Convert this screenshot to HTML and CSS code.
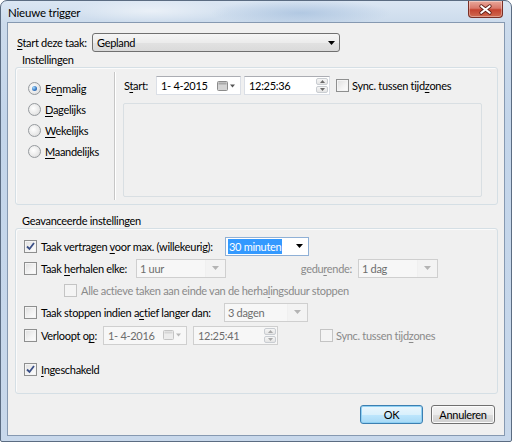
FILE: index.html
```html
<!DOCTYPE html>
<html lang="nl">
<head>
<meta charset="utf-8">
<title>Nieuwe trigger</title>
<link rel="stylesheet" href="styles.css">
</head>
<body>
<div class="window">
  <div class="titlebar">
    <span class="title">Nieuwe trigger</span>
    <div class="close-btn">
      <svg width="35" height="17" viewBox="0 0 35 17"><path d="M13 5 L22 12 M22 5 L13 12" stroke="#5e1d15" stroke-width="4" stroke-linecap="round"/><path d="M13 5 L22 12 M22 5 L13 12" stroke="#ffffff" stroke-width="2.2" stroke-linecap="round"/></svg>
    </div>
  </div>
  <div class="client">
    <div class="start-row">
      <span class="start-label"><u>S</u>tart deze taak:</span>
      <div class="combo combo-main"><span class="combo-text">Gepland</span><svg class="tri" width="7" height="4" viewBox="0 0 7 4"><path d="M0 0H7L3.5 4Z" fill="#000"/></svg></div>
    </div>
    <div class="group-title">Instellingen</div>
    <div class="group settings">
      <div class="radios">
        <div class="radio-row"><span class="radio on"></span><span>Ee<u>n</u>malig</span></div>
        <div class="radio-row"><span class="radio"></span><span><u>D</u>agelijks</span></div>
        <div class="radio-row"><span class="radio"></span><span><u>W</u>ekelijks</span></div>
        <div class="radio-row"><span class="radio"></span><span><u>M</u>aandelijks</span></div>
      </div>
      <div class="vsep"></div>
      <div class="settings-right">
        <div class="start-line">
          <span class="lbl-start">S<u>t</u>art:</span>
          <div class="field date"><span class="ftext">1- 4-2015</span><svg class="cal" width="18" height="10" viewBox="0 0 18 10"><rect x="0.5" y="0.5" width="10" height="9" rx="1" fill="#d4d4d4" stroke="#8c8c8c"/><rect x="1.5" y="1.5" width="8" height="2" fill="#a8a8a8"/><path d="M13 3.5H18L15.5 6.5Z" fill="#555"/></svg></div>
          <div class="field time"><span class="ftext">12:25:36</span>
            <div class="spin"><span class="spin-btn"><svg width="5" height="3" viewBox="0 0 5 3"><path d="M0 3H5L2.5 0Z" fill="#6b6b6b"/></svg></span><span class="spin-btn"><svg width="5" height="3" viewBox="0 0 5 3"><path d="M0 0H5L2.5 3Z" fill="#6b6b6b"/></svg></span></div>
          </div>
          <span class="check"></span><span class="check-label">Sync. tussen tijd<u>z</u>ones</span>
        </div>
        <div class="panel"></div>
      </div>
    </div>
    <div class="group-title adv-title">Geavanceerde instellingen</div>
    <div class="group advanced">
      <div class="row r1">
        <span class="check on"><svg width="11" height="11" viewBox="0 0 11 11"><path d="M2 5.5 L4.5 8 L9 2" fill="none" stroke="#3a4f86" stroke-width="1.8"/></svg></span>
        <span class="row-label w184">Taak vertragen <u>v</u>oor max. (willekeurig):</span>
        <div class="combo edit w84"><span class="sel">30 minuten</span><svg class="tri" width="7" height="4" viewBox="0 0 7 4"><path d="M0 0H7L3.5 4Z" fill="#000"/></svg></div>
      </div>
      <div class="row r2">
        <span class="check"></span>
        <span class="row-label w95">Taak <u>h</u>erhalen elke:</span>
        <div class="combo dis w90"><span class="combo-text">1 uur</span><span class="dis-arrow"><svg width="7" height="4" viewBox="0 0 7 4"><path d="M0 0H7L3.5 4Z" fill="#b4b4b4"/></svg></span></div>
        <span class="right-label gray">gedu<u>r</u>ende:</span>
        <div class="combo dis w80"><span class="combo-text">1 dag</span><span class="dis-arrow"><svg width="7" height="4" viewBox="0 0 7 4"><path d="M0 0H7L3.5 4Z" fill="#b4b4b4"/></svg></span></div>
      </div>
      <div class="row r3">
        <span class="check disabled"></span>
        <span class="row-label gray">Alle actieve taken aan einde van de herha<u>l</u>ingsduur stoppen</span>
      </div>
      <div class="row r4">
        <span class="check"></span>
        <span class="row-label w183">Taak stoppen indien a<u>c</u>tief langer dan:</span>
        <div class="combo dis w84"><span class="combo-text">3 dagen</span><span class="dis-arrow"><svg width="7" height="4" viewBox="0 0 7 4"><path d="M0 0H7L3.5 4Z" fill="#b4b4b4"/></svg></span></div>
      </div>
      <div class="row r5">
        <span class="check"></span>
        <span class="row-label w62">Verloopt o<u>p</u>:</span>
        <div class="field date dis-field w84"><span class="ftext">1- 4-2016</span><svg class="cal" width="18" height="10" viewBox="0 0 18 10"><rect x="0.5" y="0.5" width="10" height="9" rx="1" fill="#ececec" stroke="#c4c4c4"/><rect x="1.5" y="1.5" width="8" height="2" fill="#d6d6d6"/><path d="M13 3.5H18L15.5 6.5Z" fill="#b8b8b8"/></svg></div>
        <div class="field time dis-field w85"><span class="ftext">12:25:41</span>
          <div class="spin"><span class="spin-btn"><svg width="5" height="3" viewBox="0 0 5 3"><path d="M0 3H5L2.5 0Z" fill="#a8a8a8"/></svg></span><span class="spin-btn"><svg width="5" height="3" viewBox="0 0 5 3"><path d="M0 0H5L2.5 3Z" fill="#a8a8a8"/></svg></span></div>
        </div>
        <span class="check disabled sync2"></span><span class="check-label gray">Sync. tussen tijd<u>z</u>ones</span>
      </div>
      <div class="row r6">
        <span class="check on"><svg width="11" height="11" viewBox="0 0 11 11"><path d="M2 5.5 L4.5 8 L9 2" fill="none" stroke="#3a4f86" stroke-width="1.8"/></svg></span>
        <span class="row-label"><u>I</u>ngeschakeld</span>
      </div>
    </div>
    <div class="buttons">
      <div class="btn default">OK</div>
      <div class="btn">Annuleren</div>
    </div>
  </div>
</div>
</body>
</html>
```

FILE: styles.css
```css
* { box-sizing: border-box; }
html, body { margin: 0; padding: 0; }
body {
  width: 512px;
  height: 442px;
  overflow: hidden;
  background: #ffffff;
  font-family: Lato, "Noto Sans", sans-serif;
  font-size: 11px;
  letter-spacing: -0.3px;
  color: #000;
  white-space: nowrap;
}
u { text-decoration-thickness: 1px; text-underline-offset: 2px; }

.window {
  width: 512px;
  height: 442px;
  border: 1px solid #5b6c82;
  border-radius: 7px 7px 2px 2px;
  background:
    radial-gradient(ellipse 90px 14px at 300px 12px, rgba(150,180,215,0.55), rgba(150,180,215,0) 100%),
    radial-gradient(ellipse 80px 12px at 150px 10px, rgba(255,255,255,0.5), rgba(255,255,255,0) 100%),
    linear-gradient(180deg, #dbe6f3 0px, #ccdbec 22px, #c3d5ea 120px, #c8d8eb 100%);
  display: flex;
  flex-direction: column;
}

.titlebar {
  height: 21px;
  display: flex;
  align-items: flex-start;
  flex: none;
}
.title {
  padding: 4px 0 0 7px;
  font-size: 11.5px;
  line-height: 15px;
  letter-spacing: -0.2px;
  color: #000;
}
.close-btn {
  margin-left: auto;
  margin-right: 8px;
  width: 35px;
  height: 17px;
  border: 1px solid #7a2f25;
  border-top: none;
  border-radius: 0 0 4px 4px;
  background: linear-gradient(180deg, #e9a99b 0%, #d9786a 45%, #c4432f 55%, #cf6a50 100%);
  box-shadow: inset 0 0 0 1px rgba(255,255,255,0.35);
  display: flex;
}
.close-btn svg { display: block; }

.client {
  flex: 1;
  margin: 0 6px 5px 6px;
  border: 1px solid #8699b1;
  background: #f0f0f0;
  display: flex;
  flex-direction: column;
}

.start-row {
  display: flex;
  align-items: center;
  padding: 10px 0 0 9px;
  height: 29px;
}
.start-label { width: 75px; flex: none; }

.combo {
  height: 19px;
  display: flex;
  align-items: center;
  position: relative;
}
.combo-main {
  width: 248px;
  border: 1px solid #707070;
  border-radius: 3px;
  background: linear-gradient(180deg, #f5f5f5 0%, #ececec 50%, #e2e2e2 51%, #dadada 100%);
  padding-left: 4px;
}
.combo-main .tri { margin-left: auto; margin-right: 4px; }

.group-title {
  margin-left: 14px;
  height: 15px;
  line-height: 15px;
}
.group {
  margin: 0 6px 0 7px;
  border: 1px solid #d5dfe5;
  border-radius: 3px;
  box-shadow: inset 1px 1px 0 #fbfbfb;
}

.settings {
  height: 138px;
  display: flex;
}
.radios {
  width: 98px;
  padding: 10px 0 0 12px;
}
.radio-row {
  height: 21px;
  display: flex;
  align-items: center;
  gap: 4px;
}
.radio {
  width: 13px;
  height: 13px;
  border-radius: 50%;
  border: 1px solid #969a9e;
  background: radial-gradient(circle at 40% 40%, #ffffff 0%, #e8e8e8 60%, #d2d2d2 100%);
  flex: none;
  position: relative;
}
.radio.on::after {
  content: "";
  position: absolute;
  left: 3px;
  top: 3px;
  width: 5px;
  height: 5px;
  border-radius: 50%;
  background: radial-gradient(circle at 35% 35%, #a9dcfb 0%, #3a7bc7 55%, #1b4a86 100%);
}
.vsep {
  width: 2px;
  margin: 4px 0;
  border-left: 1px solid #c6c6c6;
  border-right: 1px solid #ffffff;
}
.settings-right {
  flex: 1;
  padding: 8px 15px 7px 7px;
  display: flex;
  flex-direction: column;
}
.start-line {
  height: 19px;
  display: flex;
  align-items: center;
}
.lbl-start { width: 33px; padding-left: 1px; flex: none; }

.field {
  height: 19px;
  background: #ffffff;
  border: 1px solid #dbdfe6;
  border-top-color: #abadb3;
  display: flex;
  align-items: center;
  padding-left: 4px;
  flex: none;
}
.ftext { white-space: pre; }
.date { width: 85px; }
.date .cal { margin-left: auto; margin-right: 5px; }
.time { width: 86px; margin-left: 3px; }
.spin {
  margin-left: auto;
  margin-right: 1px;
  display: flex;
  flex-direction: column;
  gap: 1px;
}
.spin-btn {
  width: 12px;
  height: 7px;
  border: 1px solid #c9cdd2;
  border-radius: 2px;
  background: linear-gradient(180deg, #f6f6f6, #e4e4e4);
  display: flex;
  align-items: center;
  justify-content: center;
}
.spin-btn svg { display: block; }

.check {
  width: 13px;
  height: 13px;
  border: 1px solid #8e8f8f;
  background: linear-gradient(135deg, #dedede 0%, #f4f4f4 60%, #fdfdfd 100%);
  box-shadow: inset 0 0 0 1px #f4f4f4;
  flex: none;
  display: flex;
  align-items: center;
  justify-content: center;
}
.check svg { display: block; }
.check.disabled {
  border-color: #c4c4c4;
  background: #f4f4f4;
  box-shadow: none;
}
.start-line .check { margin-left: 6px; }
.check-label { margin-left: 3px; }

.panel {
  flex: 1;
  margin-top: 8px;
  border: 1px solid #d9dfe3;
  border-radius: 2px;
}

.adv-title { margin-top: 8px; }
.advanced {
  height: 166px;
  padding: 7px 0 0 8px;
}
.row {
  height: 20px;
  display: flex;
  align-items: center;
}
.r2, .r3, .r4 { margin-top: 2px; }
.r5 { margin-top: 3px; }
.r6 { margin-top: 14px; }
.r3 { padding-left: 40px; }
.row-label { margin-left: 4px; white-space: nowrap; }
.w184 { width: 184px; flex: none; }
.w183 { width: 183px; flex: none; }
.w95 { width: 95px; flex: none; }
.w62 { width: 62px; flex: none; }
.w84 { width: 84px; flex: none; }
.w85 { width: 85px; flex: none; }
.w90 { width: 90px; flex: none; }
.w80 { width: 80px; flex: none; }
.gray { color: #8a8a8a; }

.combo.edit {
  background: #ffffff;
  border: 1px solid #8fb0d6;
  padding-left: 2px;
}
.sel {
  background: #3399ff;
  color: #ffffff;
  padding: 0 1px;
  line-height: 15px;
}
.combo.edit .tri { margin-left: auto; margin-right: 5px; }

.combo.dis {
  background: #f7f7f7;
  border: 1px solid #cfcfcf;
  padding-left: 3px;
  color: #6d6d6d;
}
.dis-arrow {
  margin-left: auto;
  width: 20px;
  height: 100%;
  display: flex;
  align-items: center;
  justify-content: center;
  border-left: 1px solid #f0f0f0;
  background: #f3f3f3;
}
.right-label {
  width: 126px;
  text-align: right;
  margin-right: 6px;
  flex: none;
}
.dis-field {
  background: #f7f7f7;
  border-color: #cfcfcf;
  color: #6d6d6d;
}
.r5 .time { margin-left: 6px; }
.sync2 { margin-left: 42px; }

.buttons {
  display: flex;
  justify-content: flex-end;
  gap: 8px;
  margin-top: 11px;
  padding-right: 9px;
}
.btn {
  height: 19px;
  width: 64px;
  border: 1px solid #707070;
  border-radius: 3px;
  background: linear-gradient(180deg, #f3f3f3 0%, #ebebeb 50%, #dddddd 51%, #d0d0d0 100%);
  box-shadow: inset 0 0 0 1px #fcfcfc;
  display: flex;
  align-items: center;
  justify-content: center;
}
.btn.default {
  width: 63px;
  border-color: #3c7fb1;
  background: linear-gradient(180deg, #eaf6fd 0%, #d9f0fc 50%, #bee6fd 51%, #a7d9f5 100%);
  box-shadow: inset 0 0 0 1px #8fd0f3;
}
```
